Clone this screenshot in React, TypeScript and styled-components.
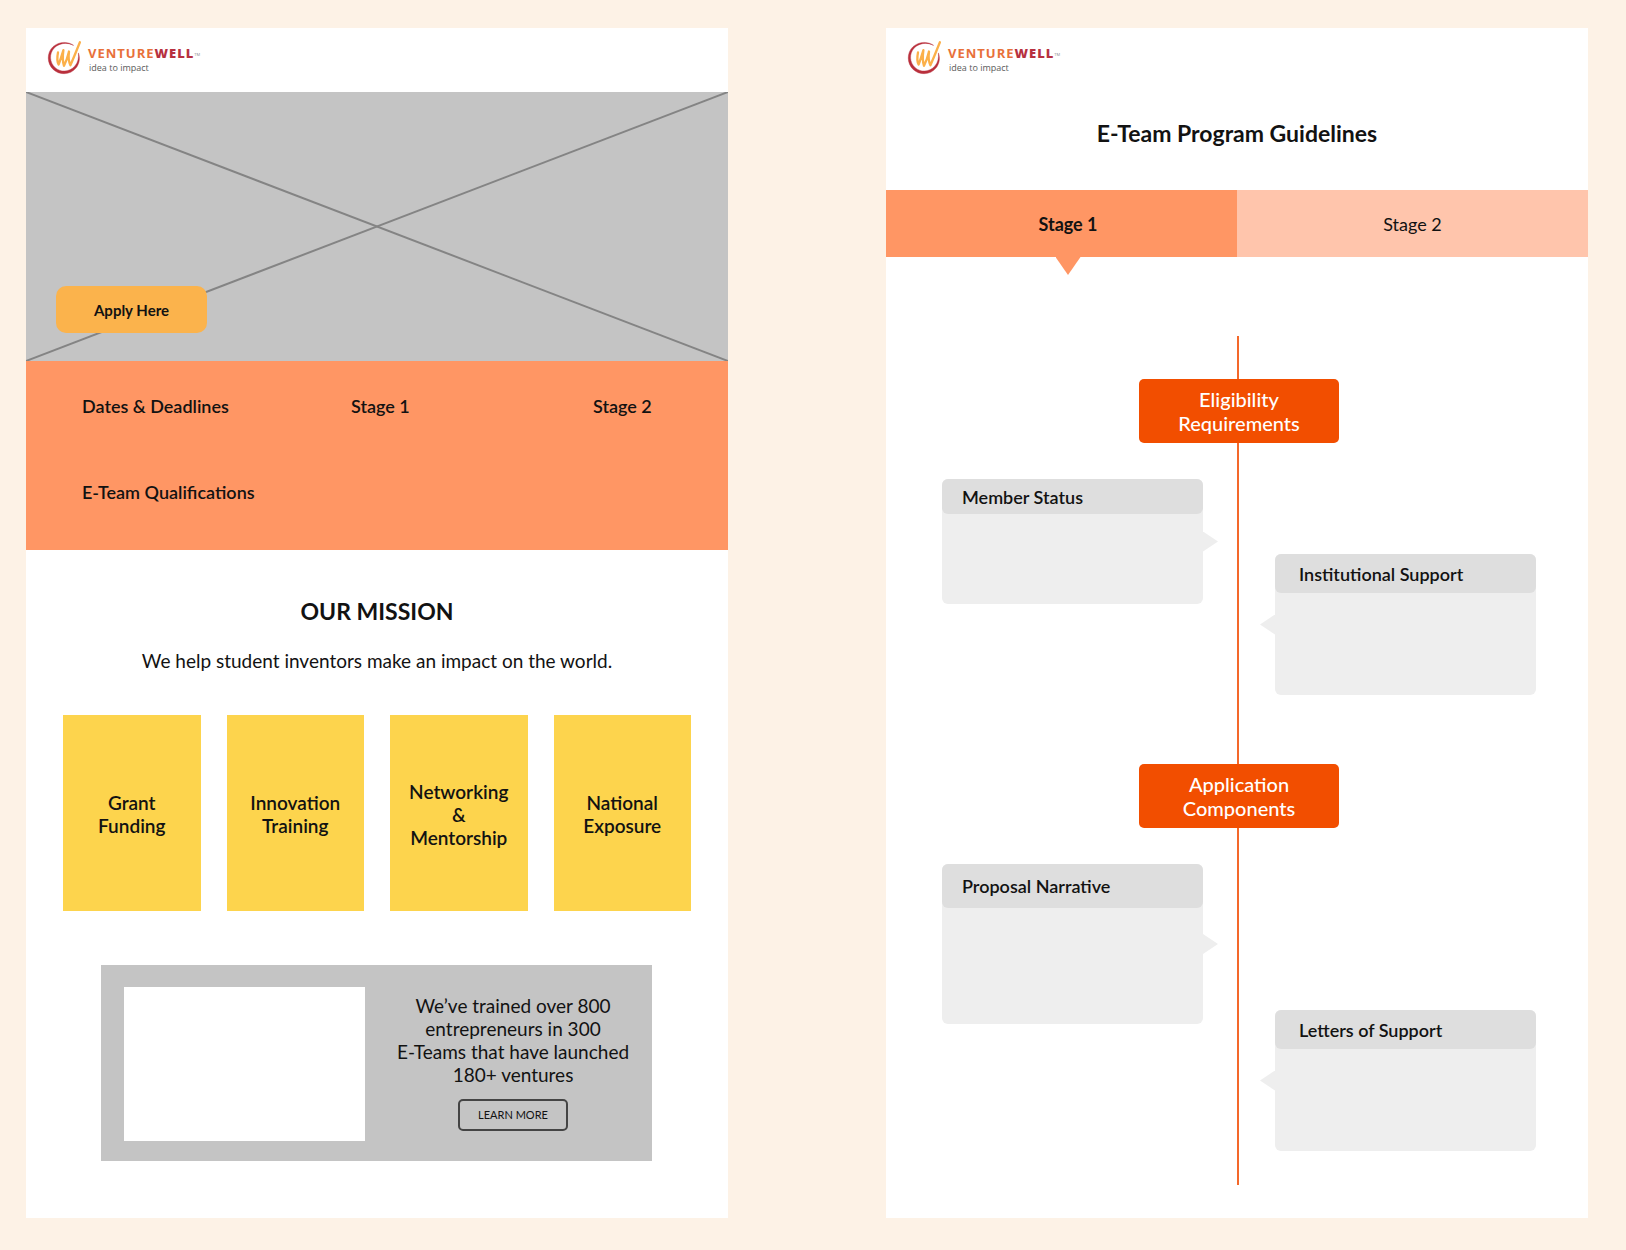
import React from "react";
import styled, { createGlobalStyle } from "styled-components";

const GlobalStyle = createGlobalStyle`
  *, *::before, *::after { box-sizing: border-box; }
  body {
    margin: 0;
    background: #fdf2e6;
    color: #121212;
    font-family: Lato, "Open Sans", sans-serif;
  }
  h1, h2, h3, p { margin: 0; }
  button { font-family: inherit; color: inherit; cursor: pointer; }
`;

const Page = styled.main`
  display: grid;
  grid-template-columns: 1fr 1fr;
  gap: 158px;
  min-height: 100vh;
  padding: 28px 38px 32px 26px;
`;

const Board = styled.article`
  display: flex;
  flex-direction: column;
  background: #fff;
`;

/* Brand header */

const Header = styled.header`
  display: flex;
  align-items: flex-start;
  height: 64px;
  padding: 12px 20px 0;
`;

const BrandLink = styled.a`
  display: flex;
  gap: 6px;
  color: #5b5b5b;
  text-decoration: none;
`;

const BrandText = styled.span`
  display: flex;
  flex-direction: column;
  padding-top: 5px;
`;

const BrandName = styled.span`
  display: flex;
  height: 16px;
  color: #e8713a;
  font-family: "Open Sans", Lato, sans-serif;
  font-size: 13px;
  font-weight: 700;
  line-height: 16px;
  letter-spacing: 1px;

  b { color: #b7313f; }
  sup { color: #8a8a8a; font-size: 4px; font-weight: 400; line-height: 20px; letter-spacing: 0; }
`;

const Tagline = styled.span`
  padding-left: 1px;
  font-family: "Open Sans", sans-serif;
  font-size: 9px;
  line-height: 14px;
`;

function Brand() {
  return (
    <Header>
      <BrandLink href="#home">
        <svg width="36" height="36" viewBox="0 0 36 36" fill="none" aria-hidden="true">
          <path d="M27.600 5.400C22 1.200 13.200 1.200 7 6.700C.6 12.500.7 23.300 7.200 29.500C13.700 35.600 24.600 35 30.200 27.800C33.600 23.300 34.300 17.800 32.400 12.900C32.900 17.700 32 22.300 28.900 26C23.600 32.200 14.700 32.600 9.200 27.700C3.400 22.400 3 13.600 8.200 8C13.400 2.900 20.900 2 27.600 5.400Z" fill="#b92f3c" stroke="#b92f3c" strokeWidth=".4" />
          <path d="M12 12.500C11 17.500 11 21.500 12.600 24.500C14.500 20 15.800 15 17.400 10.200C16.600 16 16.500 21.500 18 25.800C20.200 21.500 21.800 16.500 23 11.500C22.300 17 22.500 21.500 24.400 25.200C27.500 18.500 30.500 10.500 33.900 2.300" stroke="#fbb04a" strokeWidth="2.300" strokeLinejoin="round" strokeLinecap="round" />
        </svg>
        <BrandText>
          <BrandName>VENTURE<b>WELL</b><sup>TM</sup></BrandName>
          <Tagline>idea to impact</Tagline>
        </BrandText>
      </BrandLink>
    </Header>
  );
}

/* Landing board */

const Hero = styled.section`
  display: grid;
  height: 269px;
  background: #c4c4c4;

  > * { grid-area: 1 / 1; }
`;

const Cross = styled.svg`
  width: 100%;
  height: 269px;
  stroke: #848484;
  stroke-width: 2px;
`;

const ApplyButton = styled.button`
  z-index: 1;
  align-self: end;
  justify-self: start;
  width: 151px;
  height: 47px;
  margin: 0 0 28px 30px;
  border: 0;
  border-radius: 10px;
  background: #fbb34c;
  font-size: 15px;
  font-weight: 700;
`;

const Facts = styled.section`
  display: grid;
  grid-template-columns: 269fr 242fr 135fr;
  row-gap: 62px;
  height: 189px;
  padding: 33px 0 0 56px;
  align-content: start;
  background: #ff9664;
`;

const Label = styled.h3`
  font-size: 18px;
  font-weight: 600;
  line-height: 24px;
`;

const Mission = styled.section`
  display: flex;
  flex-direction: column;
  align-items: center;
  padding: 47px 37px 0;
`;

const Heading = styled.h2`
  font-size: 23px;
  font-weight: 700;
  line-height: 28px;
  text-align: center;
`;

const Lead = styled.p`
  margin-top: 24px;
  font-size: 19px;
  line-height: 24px;
`;

const Cards = styled.ul`
  display: grid;
  grid-template-columns: repeat(4, 1fr);
  gap: 26px;
  align-self: stretch;
  margin: 42px 0 0;
  padding: 0;
  list-style: none;
`;

const Card = styled.li`
  display: flex;
  align-items: center;
  justify-content: center;
  height: 196px;
  padding: 2px 12px 0;
  background: #fdd44d;
  font-size: 19px;
  font-weight: 600;
  line-height: 23px;
  text-align: center;
  white-space: pre-line;
`;

const Banner = styled.section`
  display: grid;
  grid-template-columns: 241fr 278fr;
  gap: 9px;
  height: 196px;
  margin: 54px 76px 0 75px;
  padding: 22px 0 20px 23px;
  background: #c4c4c4;
`;

const Media = styled.div`
  background: #fff;
`;

const BannerCopy = styled.div`
  display: flex;
  flex-direction: column;
  align-items: center;
  padding-top: 7px;

  p {
    font-size: 19px;
    line-height: 23px;
    text-align: center;
    white-space: pre-line;
  }
`;

const OutlineButton = styled.button`
  width: 110px;
  height: 32px;
  margin-top: 13px;
  padding: 0 0 2px;
  border: 2px solid #444;
  border-radius: 5px;
  background: transparent;
  font-size: 11px;
`;

/* Guidelines board */

const TitleBar = styled.div`
  padding: 27px 0 43px;
`;

const Tabs = styled.div`
  display: grid;
  grid-template-columns: 1fr 1fr;
`;

const Tab = styled.button<{ $active?: boolean }>`
  position: relative;
  height: 67px;
  padding: 0 0 0 ${(p) => (p.$active ? "13px" : "0")};
  border: 0;
  background: ${(p) => (p.$active ? "#ff9664" : "#ffc5ac")};
  font-size: 18px;
  font-weight: ${(p) => (p.$active ? 700 : 400)};
`;

const TabPointer = styled.span`
  position: absolute;
  top: 100%;
  left: calc(50% - 6px);
  width: 25px;
  height: 18px;
  background: #ff9664;
  clip-path: polygon(0 0, 100% 0, 50% 100%);
`;

const Timeline = styled.section`
  position: relative;
  display: flex;
  flex-direction: column;
  margin: 79px 0 32px;
  padding: 43px 52px 34px 56px;

  &::before {
    content: "";
    position: absolute;
    top: 0;
    bottom: 0;
    left: 50%;
    width: 2px;
    background: #f4682a;
  }
`;

const Milestone = styled.h2`
  z-index: 1;
  align-self: center;
  display: flex;
  align-items: center;
  justify-content: center;
  width: 200px;
  height: 64px;
  border-radius: 5px;
  background: #f24e00;
  color: #fff;
  font-size: 20px;
  font-weight: 500;
  line-height: 24px;
  text-align: center;
  white-space: pre-line;
`;

const Steps = styled.div`
  display: grid;
  grid-template-columns: 1fr 1fr;
  gap: 72px;
  align-items: start;
  padding: 36px 0 69px;

  &:last-child { padding-bottom: 0; }
`;

const Step = styled.article<{ $side: "left" | "right"; $height: number; $drop?: number }>`
  position: relative;
  height: ${(p) => p.$height}px;
  margin-top: ${(p) => p.$drop ?? 0}px;
  border-radius: 6px;
  background: #eee;

  &::after {
    content: "";
    position: absolute;
    top: 50%;
    ${(p) => (p.$side === "left" ? "left" : "right")}: 100%;
    width: 15px;
    height: 20px;
    margin-top: -10px;
    background: #eee;
    clip-path: ${(p) =>
      p.$side === "left" ? "polygon(0 0, 100% 50%, 0 100%)" : "polygon(100% 0, 0 50%, 100% 100%)"};
  }
`;

const StepTitle = styled.header<{ $side: "left" | "right"; $height: number }>`
  display: flex;
  align-items: center;
  height: ${(p) => p.$height}px;
  padding-left: ${(p) => (p.$side === "left" ? 20 : 24)}px;
  border-radius: 6px;
  background: #dedede;
`;

const benefits = [
  "Grant\nFunding",
  "Innovation\nTraining",
  "Networking\n&\nMentorship",
  "National\nExposure",
];

type StepInfo = { title: string; side: "left" | "right"; height: number; head: number; drop?: number };

const milestones: { title: string; steps: StepInfo[] }[] = [
  {
    title: "Eligibility\nRequirements",
    steps: [
      { title: "Member Status", side: "left", height: 125, head: 35 },
      { title: "Institutional Support", side: "right", height: 141, head: 39, drop: 75 },
    ],
  },
  {
    title: "Application\nComponents",
    steps: [
      { title: "Proposal Narrative", side: "left", height: 160, head: 44 },
      { title: "Letters of Support", side: "right", height: 141, head: 39, drop: 146 },
    ],
  },
];

export default function App() {
  return (
    <>
      <GlobalStyle />
      <Page>
        <Board>
          <Brand />
          <Hero>
            <Cross viewBox="0 0 702 269" preserveAspectRatio="none" aria-hidden="true">
              <line x1="0" y1="0" x2="702" y2="269" />
              <line x1="0" y1="269" x2="702" y2="0" />
            </Cross>
            <ApplyButton>Apply Here</ApplyButton>
          </Hero>
          <Facts>
            <Label>Dates &amp; Deadlines</Label>
            <Label>Stage 1</Label>
            <Label>Stage 2</Label>
            <Label>E-Team Qualifications</Label>
          </Facts>
          <Mission>
            <Heading>OUR MISSION</Heading>
            <Lead>We help student inventors make an impact on the world.</Lead>
            <Cards>
              {benefits.map((b) => (
                <Card key={b}>{b}</Card>
              ))}
            </Cards>
          </Mission>
          <Banner>
            <Media />
            <BannerCopy>
              <p>{"We’ve trained over 800\nentrepreneurs in 300\nE-Teams that have launched\n180+ ventures"}</p>
              <OutlineButton>LEARN MORE</OutlineButton>
            </BannerCopy>
          </Banner>
        </Board>

        <Board>
          <Brand />
          <TitleBar>
            <Heading as="h1">E-Team Program Guidelines</Heading>
          </TitleBar>
          <Tabs role="tablist">
            <Tab role="tab" aria-selected="true" $active>
              Stage 1
              <TabPointer />
            </Tab>
            <Tab role="tab" aria-selected="false">Stage 2</Tab>
          </Tabs>
          <Timeline>
            {milestones.map((m) => (
              <React.Fragment key={m.title}>
                <Milestone>{m.title}</Milestone>
                <Steps>
                  {m.steps.map((s) => (
                    <Step key={s.title} $side={s.side} $height={s.height} $drop={s.drop}>
                      <StepTitle $side={s.side} $height={s.head}>
                        <Label>{s.title}</Label>
                      </StepTitle>
                    </Step>
                  ))}
                </Steps>
              </React.Fragment>
            ))}
          </Timeline>
        </Board>
      </Page>
    </>
  );
}
